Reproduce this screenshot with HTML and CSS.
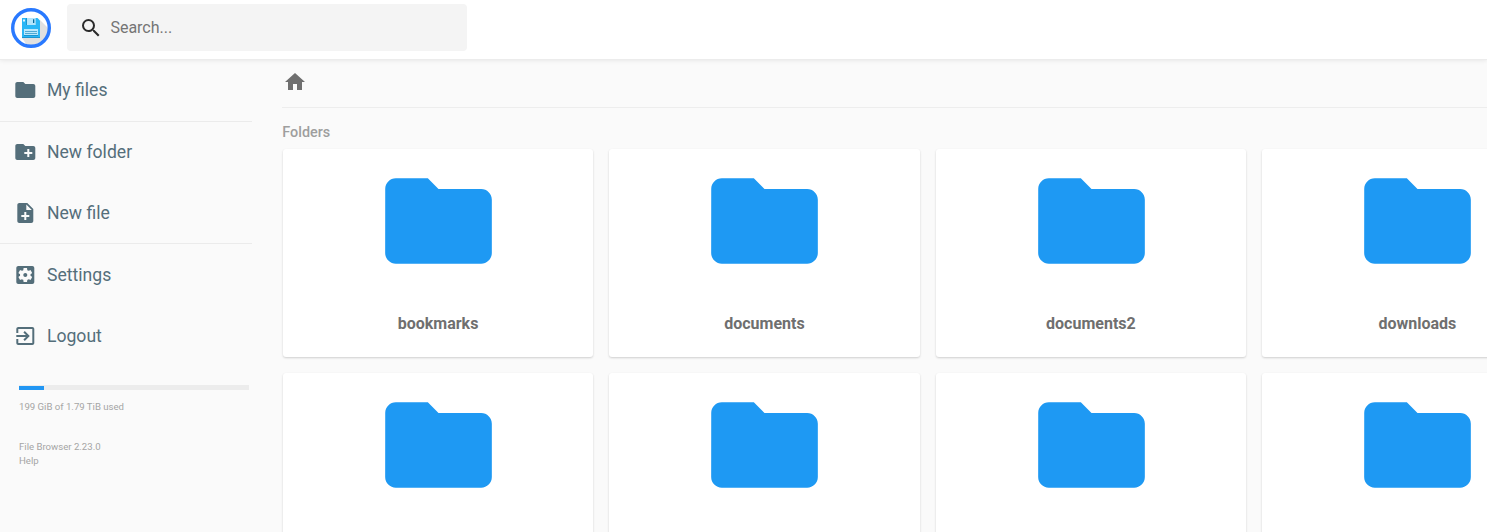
FILE: index.html
```html
<!DOCTYPE html>
<html lang="en">
<head>
<meta charset="utf-8">
<title>File Browser</title>
<link rel="stylesheet" href="styles.css">
</head>
<body>
<svg class="defs" width="0" height="0">
  <symbol id="folder" viewBox="0 0 24 24"><path d="M10 4H4c-1.1 0-1.99.9-1.99 2L2 18c0 1.1.9 2 2 2h16c1.1 0 2-.9 2-2V8c0-1.1-.9-2-2-2h-8l-2-2z"/></symbol>
</svg>
<header class="header">
  <svg class="logo" viewBox="0 0 40 40">
    <circle cx="20" cy="20" r="18.3" fill="#fff"/>
    <path d="M29 12L37.500 20.500a17.500 17.500 0 0 1-22 16L11 30z" fill="#e0e0e0"/>
    <circle cx="20" cy="20" r="18.3" fill="none" stroke="#2979ff" stroke-width="3.4"/>
    <path d="M11 10h15.500l2.500 2.500V30H11z" fill="#29b6f6"/>
    <path d="M11 29h18v1H11z" fill="#1a95d0"/>
    <path d="M15 10h9.700v7H15z" fill="#b3e5fc"/>
    <path d="M15 10h1v7h-1z" fill="#1a95d0"/>
    <path d="M22 11.200h1.300v3.800H22z" fill="#01689b"/>
    <path d="M12 11.500h2v2h-2z" fill="#e1f5fe"/>
    <path d="M13 21h14v7H13z" fill="#b9e8fc"/>
    <path d="M14 23h12v1H14zM14 25h12v1H14z" fill="#4fa9d4"/>
    <path d="M13 27h14v1H13z" fill="#1a95d0"/>
  </svg>
  <div class="search">
    <svg class="icon" viewBox="0 0 24 24"><path d="M15.500 14h-.79l-.28-.27A6.471 6.471 0 0 0 16 9.500 6.500 6.500 0 1 0 9.500 16c1.610 0 3.090-.59 4.230-1.570l.27.28v.79l5 4.990L20.490 19l-4.990-5zm-6 0C7.010 14 5 11.990 5 9.500S7.010 5 9.500 5 14 7.010 14 9.500 11.990 14 9.500 14z"/></svg>
    <span>Search...</span>
  </div>
</header>
<div class="layout">
  <nav class="sidebar">
    <div class="group">
      <a class="action"><svg class="icon"><use href="#folder"/></svg>My files</a>
    </div>
    <div class="group">
      <a class="action"><svg class="icon" viewBox="0 0 24 24"><path d="M20 6h-8l-2-2H4c-1.110 0-1.990.89-1.990 2L2 18c0 1.110.89 2 2 2h16c1.110 0 2-.89 2-2V8c0-1.110-.89-2-2-2zm-1 8h-3v3h-2v-3h-3v-2h3V9h2v3h3v2z"/></svg>New folder</a>
      <a class="action"><svg class="icon" viewBox="0 0 24 24"><path d="M14 2H6c-1.100 0-1.990.9-1.990 2L4 20c0 1.100.89 2 1.990 2H18c1.100 0 2-.9 2-2V8l-6-6zm2 14h-3v3h-2v-3H8v-2h3v-3h2v3h3v2zm-3-7V3.500L18.500 9H13z"/></svg>New file</a>
    </div>
    <div class="group">
      <a class="action"><svg class="icon" viewBox="0 0 24 24"><path d="M12 10c-1.100 0-2 .9-2 2s.9 2 2 2 2-.9 2-2-.9-2-2-2zm7-7H5c-1.110 0-2 .9-2 2v14c0 1.100.89 2 2 2h14c1.110 0 2-.9 2-2V5c0-1.100-.89-2-2-2zm-1.750 9c0 .23-.02.46-.05.68l1.480 1.160c.13.11.17.3.08.45l-1.400 2.420c-.09.15-.27.21-.43.15l-1.740-.7c-.36.28-.76.51-1.180.69l-.26 1.850c-.03.17-.18.3-.35.3h-2.800c-.17 0-.32-.13-.35-.29l-.26-1.850c-.43-.18-.82-.41-1.180-.69l-1.740.7c-.16.06-.34 0-.43-.15l-1.400-2.420c-.09-.15-.05-.34.08-.45l1.480-1.160c-.03-.23-.05-.46-.05-.69s.02-.46.05-.68l-1.480-1.160c-.13-.11-.17-.3-.08-.45l1.400-2.420c.09-.15.27-.21.43-.15l1.740.7c.36-.28.76-.51 1.180-.69l.26-1.850c.03-.17.18-.3.35-.3h2.800c.17 0 .32.13.35.29l.26 1.850c.43.18.82.41 1.180.69l1.740-.7c.16-.06.34 0 .43.15l1.400 2.420c.09.15.05.34-.08.45l-1.480 1.160c.03.23.05.46.05.69z"/></svg>Settings</a>
      <a class="action"><svg class="icon" viewBox="0 0 24 24"><path d="M10.090 15.590L11.500 17l5-5-5-5-1.410 1.410L12.670 11H3v2h9.670l-2.580 2.590zM19 3H5c-1.110 0-2 .9-2 2v4h2V5h14v14H5v-4H3v4c0 1.100.89 2 2 2h14c1.100 0 2-.9 2-2V5c0-1.100-.9-2-2-2z"/></svg>Logout</a>
    </div>
    <div class="usage"><div class="bar"><div class="fill"></div></div>199 GiB of 1.79 TiB used</div>
    <div class="credits"><div>File Browser 2.23.0</div><div>Help</div></div>
  </nav>
  <main class="main">
    <div class="breadcrumbs"><svg class="icon" viewBox="0 0 24 24"><path d="M10 20v-6h4v6h5v-8h3L12 3 2 12h3v8z"/></svg></div>
    <h2 class="title">Folders</h2>
    <div class="grid">
      <div class="card"><svg class="big"><use href="#folder"/></svg><p>bookmarks</p></div>
      <div class="card"><svg class="big"><use href="#folder"/></svg><p>documents</p></div>
      <div class="card"><svg class="big"><use href="#folder"/></svg><p>documents2</p></div>
      <div class="card"><svg class="big"><use href="#folder"/></svg><p>downloads</p></div>
      <div class="card"><svg class="big"><use href="#folder"/></svg></div>
      <div class="card"><svg class="big"><use href="#folder"/></svg></div>
      <div class="card"><svg class="big"><use href="#folder"/></svg></div>
      <div class="card"><svg class="big"><use href="#folder"/></svg></div>
    </div>
  </main>
</div>
</body>
</html>
```
FILE: styles.css
```css
* { box-sizing: border-box; }
body {
  margin: 0;
  height: 532px;
  overflow: hidden;
  display: flex;
  flex-direction: column;
  background: #fafafa;
  color: #6f6f6f;
  font: 16px Roboto, sans-serif;
}
.defs { display: none; }
.icon { width: 24px; height: 24px; fill: currentColor; flex: none; }
.header {
  flex: none;
  height: 60px;
  display: flex;
  align-items: flex-start;
  gap: 16px;
  padding: 4px 11px;
  background: #fff;
  border-bottom: 1px solid rgba(0, 0, 0, .075);
  box-shadow: 0 0 5px rgba(0, 0, 0, .1);
  z-index: 1;
}
.logo { width: 40px; height: 40px; margin-top: 4px; }
.search {
  width: 400px;
  height: 47px;
  display: flex;
  align-items: center;
  gap: 7.400px;
  padding: 0 12px;
  border-radius: 4px;
  background: #f4f4f4;
  color: #757575;
}
.search .icon { color: #2b2b2b; }
.layout { display: flex; flex: 1; min-height: 0; overflow: hidden; }
.sidebar { flex: none; width: 252px; color: #546e7a; }
.group + .group { border-top: 1px solid rgba(0, 0, 0, .06); }
.action {
  height: 60.800px;
  display: flex;
  align-items: center;
  gap: 9.800px;
  padding: 0 0 .1px 13.200px;
  font-size: 17.600px;
}
.action .icon { transform: translateX(.3px); }
.usage, .credits { padding-left: 19px; font-size: 9.600px; line-height: 14px; color: #a5a5a5; }
.usage { padding-top: 19px; }
.bar { width: 230px; height: 5px; padding-top: 1px; margin-bottom: 10px; background: #ececec; }
.fill { width: 25px; height: 4px; background: #2196f3; }
.credits { padding-top: 26px; }
.main { flex: 1; min-width: 0; padding-left: 30.300px; overflow: hidden; }
.breadcrumbs { height: 48px; padding: 10px 0 0 .7px; border-bottom: 1px solid rgba(0, 0, 0, .05); }
.title { margin: 16px 0 8px; font-size: 14.400px; font-weight: 500; line-height: 17px; color: #9e9e9e; }
.grid { display: grid; grid-template-columns: repeat(4, 310.450px); grid-auto-rows: 208px; gap: 16px; padding-left: .5px; }
.card {
  display: flex;
  flex-direction: column;
  align-items: center;
  padding-top: 8px;
  border-radius: 3px;
  background: #fff;
  box-shadow: 0 1px 3px rgba(0, 0, 0, .06), 0 1px 2px rgba(0, 0, 0, .12);
}
.big { width: 128px; height: 128px; flex: none; fill: #1e99f3; transform: translateX(.5px); }
.card p { margin: 29px 0 0; font-weight: 700; line-height: 19px; }
```
